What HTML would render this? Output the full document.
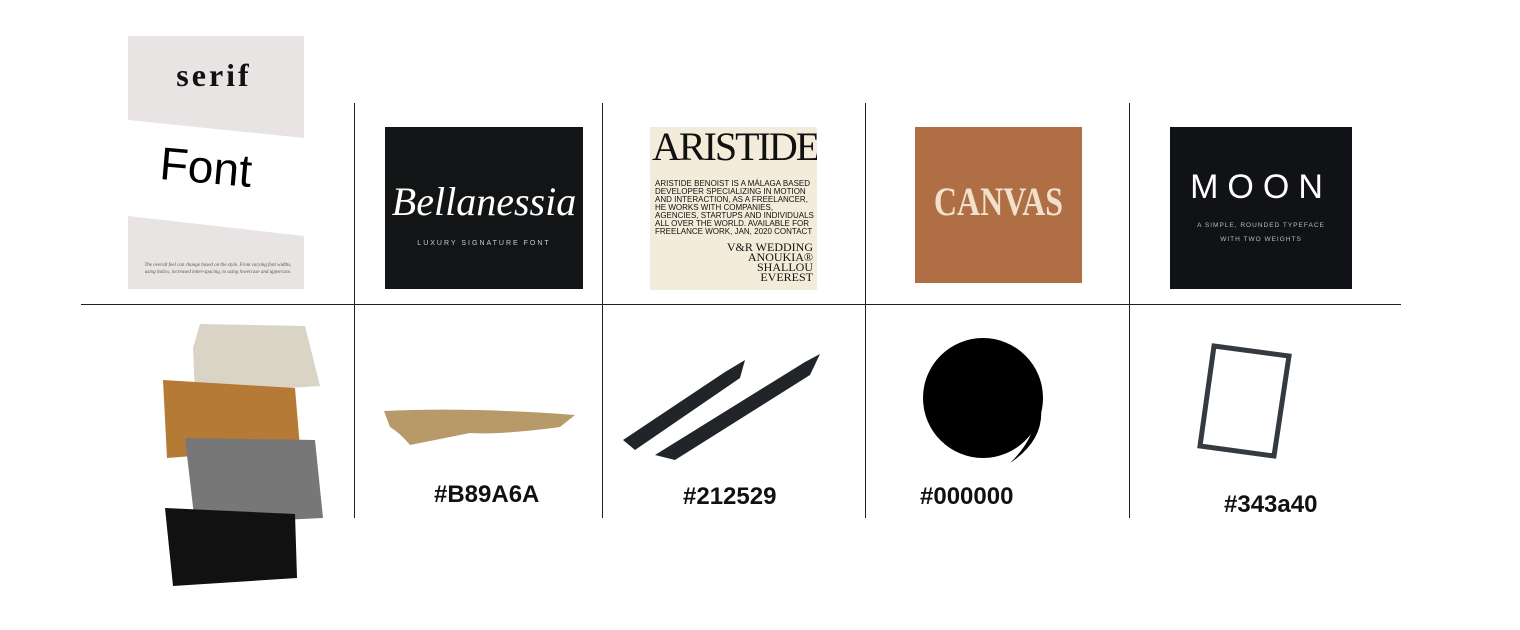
<!DOCTYPE html>
<html><head><meta charset="utf-8"><style>
body{margin:0;width:1520px;height:630px;background:#fff;position:relative;overflow:hidden;font-family:"Liberation Sans",sans-serif}
.a{position:absolute}
.v{position:absolute;width:1px;background:#222;top:103px;height:415px}
.lbl{position:absolute;font-size:24px;color:#111;font-weight:bold}
</style></head><body>
<div class="a" style="left:81px;top:304px;width:1320px;height:1px;background:#222"></div>
<div class="v" style="left:354px"></div><div class="v" style="left:602px"></div>
<div class="v" style="left:865px"></div><div class="v" style="left:1129px"></div>

<!-- serif card -->
<div class="a" style="left:128px;top:36px;width:176px;height:253px;background:#e8e4e4"></div>
<svg class="a" style="left:128px;top:36px" width="176" height="253">
<polygon points="0,84 176,102 176,200 0,180" fill="#fff"/>
<text x="86" y="50" font-family="Liberation Serif" font-size="32" font-weight="bold" letter-spacing="3" text-anchor="middle" fill="#111">serif</text>
<text x="90" y="230" font-family="Liberation Serif" font-size="5" font-style="italic" text-anchor="middle" fill="#555">The overall feel can change based on the style. From varying font widths,</text>
<text x="90" y="237" font-family="Liberation Serif" font-size="5" font-style="italic" text-anchor="middle" fill="#555">using italics, increased letter-spacing, to using lowercase and uppercase.</text>
</svg>
<div class="a" style="left:160px;top:140px;font-size:46px;transform:rotate(5deg);color:#000">Font</div>

<!-- Bellanessia -->
<div class="a" style="left:385px;top:127px;width:198px;height:162px;background:#121416"></div>
<div class="a" style="left:385px;top:178px;width:198px;text-align:center;color:#fff;font-family:'Liberation Serif';font-style:italic;font-size:40px">Bellanessia</div>
<div class="a" style="left:385px;top:240px;width:198px;text-align:center;color:#ccc;font-size:7px;letter-spacing:2px">LUXURY SIGNATURE FONT</div>

<!-- Aristide -->
<div class="a" style="left:650px;top:127px;width:167px;height:163px;background:#f3ecda;overflow:hidden">
<div style="font-family:'Liberation Serif';font-size:40px;line-height:40px;letter-spacing:-2px;color:#111;margin-left:2px">ARISTIDE</div>
<div style="font-size:8px;line-height:8px;color:#111;margin:13px 0 0 5px">ARISTIDE BENOIST IS A MÁLAGA BASED DEVELOPER SPECIALIZING IN MOTION AND INTERACTION, AS A FREELANCER, HE WORKS WITH COMPANIES, AGENCIES, STARTUPS AND INDIVIDUALS ALL OVER THE WORLD. AVAILABLE FOR FREELANCE WORK, JAN, 2020 CONTACT</div>
<div style="font-family:'Liberation Serif';font-size:12px;line-height:10px;text-align:right;margin:6px 4px 0 0;color:#111">V&amp;R WEDDING<br>ANOUKIA®<br>SHALLOU<br>EVEREST</div>
</div>

<!-- Canvas -->
<div class="a" style="left:915px;top:127px;width:167px;height:156px;background:#b06e45"></div>
<div class="a" style="left:915px;top:178px;width:167px;text-align:center;font-family:'Liberation Serif';font-weight:bold;font-size:40px;color:#f0e0cc;transform:scaleX(.8)">CANVAS</div>

<!-- Moon -->
<div class="a" style="left:1170px;top:127px;width:182px;height:162px;background:#111216"></div>
<div class="a" style="left:1170px;top:168px;width:182px;text-align:center;color:#fff;font-size:34px;letter-spacing:9px;font-weight:300">MOON</div>
<div class="a" style="left:1170px;top:219px;width:182px;text-align:center;color:#bbb;font-size:6.5px;letter-spacing:1px;line-height:14px">A SIMPLE, ROUNDED TYPEFACE<br>WITH TWO WEIGHTS</div>

<!-- swatches -->
<svg class="a" style="left:155px;top:318px" width="175" height="272">
<path d="M45,6 L150,8 L165,68 L40,76 L38,30Z" fill="#d9d4c6"/>
<path d="M8,62 L140,70 L145,130 L12,140Z" fill="#b57a35"/>
<path d="M30,120 L160,122 L168,200 L40,206Z" fill="#777"/>
<path d="M10,190 L140,196 L142,260 L18,268Z" fill="#111"/>
</svg>
<svg class="a" style="left:380px;top:405px" width="200" height="45"><path d="M4,6 Q90,2 195,10 L180,22 Q120,30 90,28 L30,40 Q20,28 10,22 Z" fill="#b89a6a"/></svg>
<svg class="a" style="left:615px;top:350px" width="210" height="112">
<path d="M8,90 L110,22 L130,10 L125,28 L20,100 Z" fill="#212529"/>
<path d="M40,105 L190,12 L205,4 L195,25 L60,110 Z" fill="#212529"/>
</svg>
<svg class="a" style="left:920px;top:335px" width="140" height="135">
<circle cx="63" cy="63" r="60" fill="#000"/>
<path d="M110,40 Q140,95 90,128 Q130,90 110,40Z" fill="#000"/>
</svg>
<svg class="a" style="left:1194px;top:338px" width="100" height="125">
<path d="M20,8 L95,18 L80,118 L6,108 Z" fill="none" stroke="#343a40" stroke-width="5"/>
</svg>

<div class="lbl" style="left:434px;top:481px">#B89A6A</div>
<div class="lbl" style="left:683px;top:483px">#212529</div>
<div class="lbl" style="left:920px;top:483px">#000000</div>
<div class="lbl" style="left:1224px;top:491px">#343a40</div>
</body></html>
